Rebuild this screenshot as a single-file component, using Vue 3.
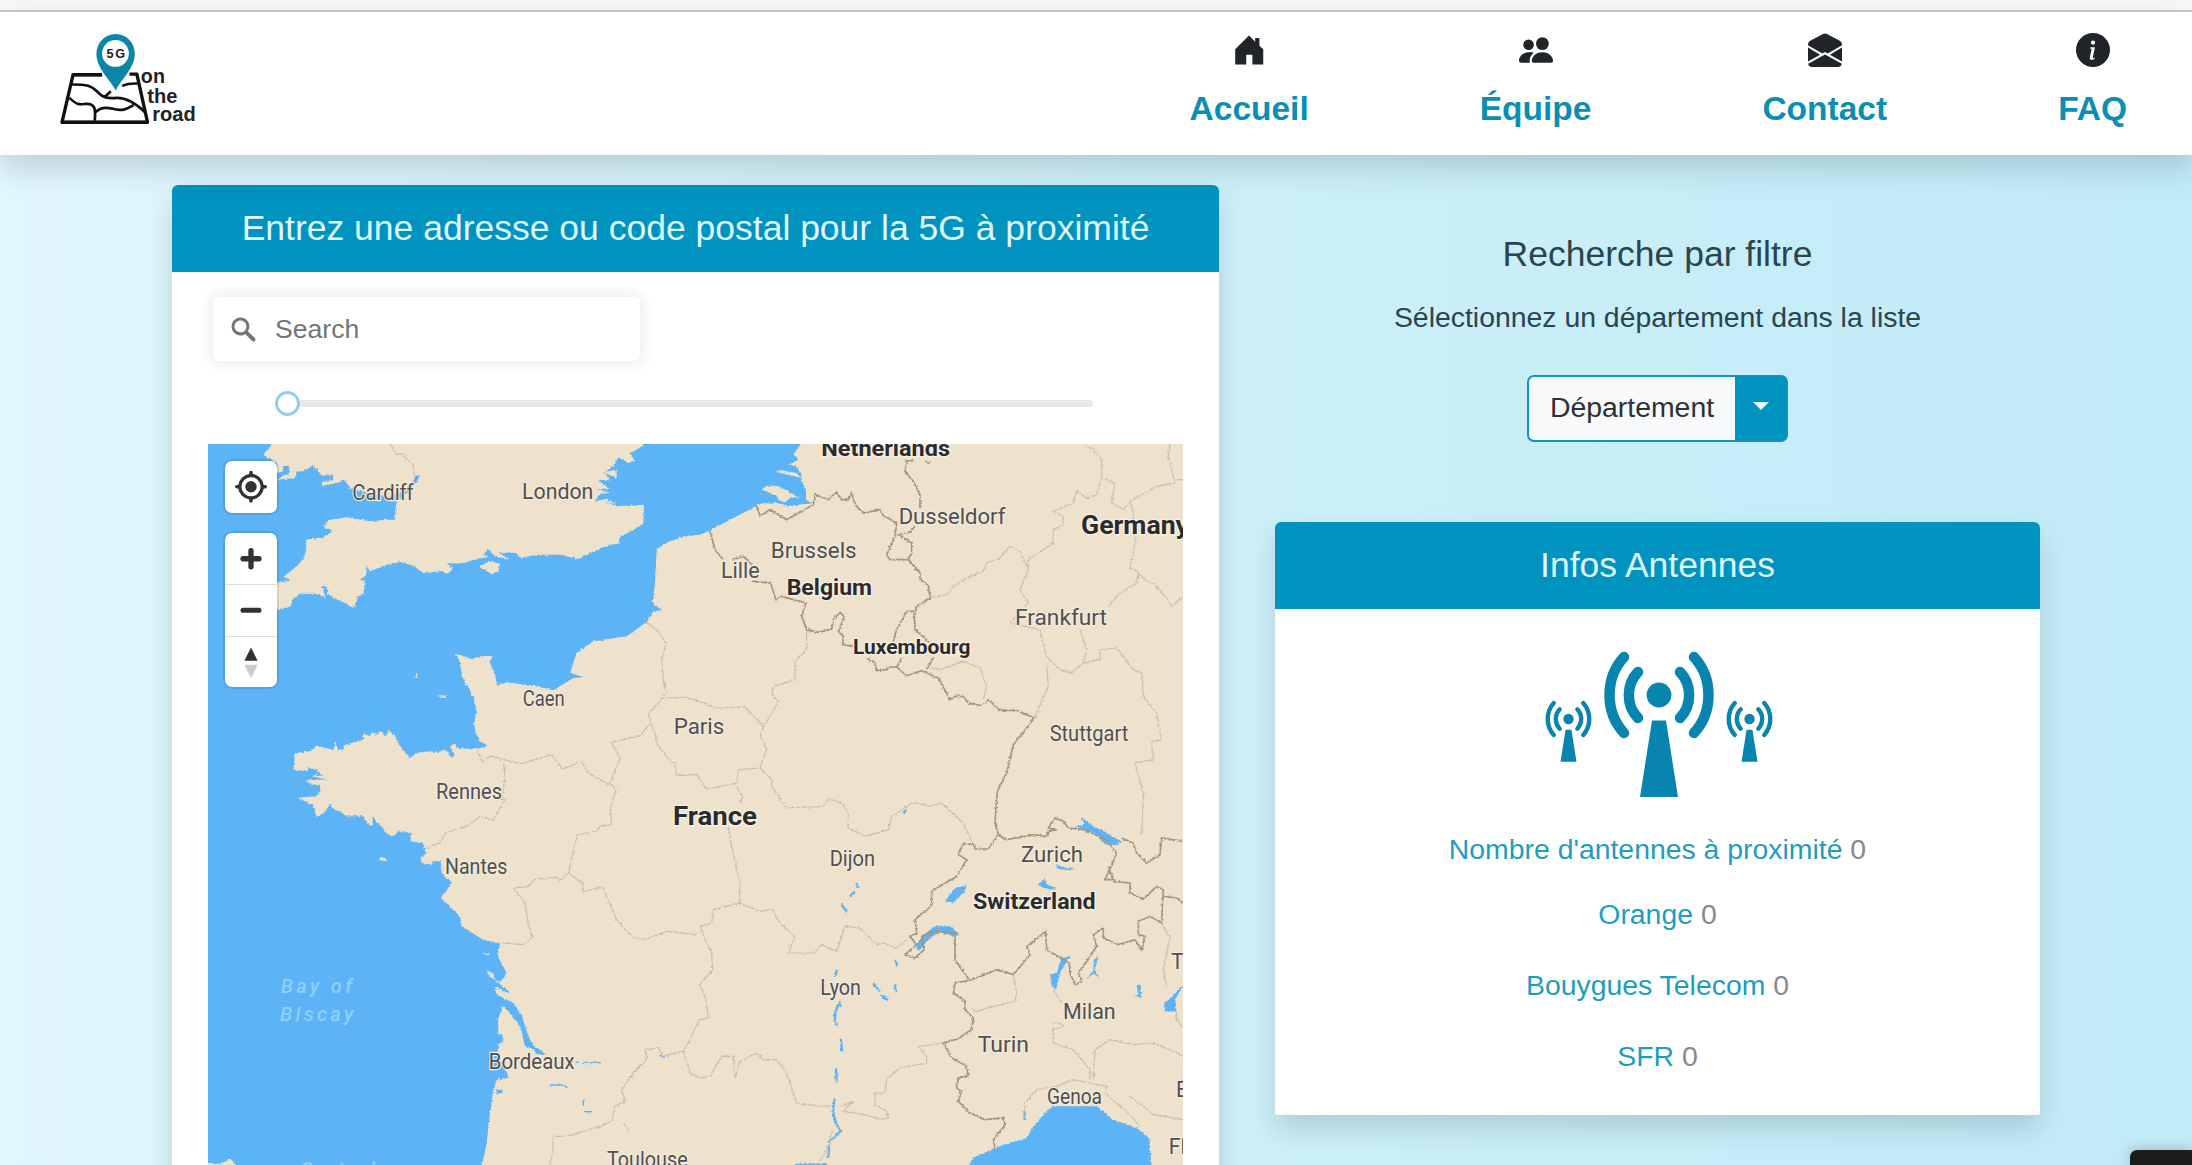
<script setup>
const nav = [
  { label: 'Accueil', icon: 'home' },
  { label: 'Équipe', icon: 'team' },
  { label: 'Contact', icon: 'mail' },
  { label: 'FAQ', icon: 'info' },
]

const counts = [
  { name: "Nombre d'antennes à proximité", value: 0 },
  { name: 'Orange', value: 0 },
  { name: 'Bouygues Telecom', value: 0 },
  { name: 'SFR', value: 0 },
]

// x, baseline and rendered width in map units
const cities = [
  { t: 'Cardiff', x: 457, y: 184, w: 184 },
  { t: 'London', x: 966, y: 181, w: 214 },
  { t: 'Caen', x: 968, y: 801, w: 126 },
  { t: 'Paris', x: 1421, y: 887, w: 152 },
  { t: 'Rennes', x: 708, y: 1080, w: 198 },
  { t: 'Nantes', x: 735, y: 1306, w: 187 },
  { t: 'Bordeaux', x: 866, y: 1892, w: 258 },
  { t: 'Toulouse', x: 1221, y: 2186, w: 242 },
  { t: 'Lille', x: 1563, y: 417, w: 116 },
  { t: 'Brussels', x: 1712, y: 359, w: 258 },
  { t: 'Dusseldorf', x: 2096, y: 257, w: 320 },
  { t: 'Frankfurt', x: 2445, y: 559, w: 276 },
  { t: 'Stuttgart', x: 2549, y: 907, w: 236 },
  { t: 'Dijon', x: 1889, y: 1281, w: 136 },
  { t: 'Zurich', x: 2463, y: 1269, w: 186 },
  { t: 'Lyon', x: 1861, y: 1670, w: 122 },
  { t: 'Milan', x: 2589, y: 1741, w: 158 },
  { t: 'Turin', x: 2333, y: 1839, w: 154 },
  { t: 'Genoa', x: 2541, y: 1996, w: 165 },
  { t: 'Trento', x: 2913, y: 1592, w: 184 },
  { t: 'Bologna', x: 2928, y: 1974, w: 232 },
  { t: 'Florence', x: 2906, y: 2146, w: 244 },
]
const countries = [
  { t: 'Netherlands', x: 1864, y: 51, w: 386, s: 64 },
  { t: 'Belgium', x: 1760, y: 470, w: 256, s: 66 },
  { t: 'Luxembourg', x: 1959, y: 646, w: 352, s: 60 },
  { t: 'Germany', x: 2643, y: 285, w: 324, s: 76 },
  { t: 'France', x: 1419, y: 1159, w: 252, s: 78 },
  { t: 'Switzerland', x: 2319, y: 1412, w: 368, s: 66 },
]
</script>

<template>
  <div class="page">
    <div class="chrome"></div>
    <header class="navbar">
      <svg class="logo" viewBox="0 0 410 275">
        <g fill="none" stroke="#111" stroke-width="8" stroke-linejoin="round">
          <path stroke-width="11" d="M126 125H40" />
          <path stroke-width="10" d="M40 121L6 267H262L230 123H208" />
          <path stroke-width="9" d="M6 267H262" />
          <path d="M36 154C80 154 94 156 112 176C128 194 142 196 170 194C202 193 228 212 254 236M133 192L152 174M186 158Q204 150 232 151M28 194C52 216 56 214 76 212C102 210 108 222 104 262M105 238C118 224 138 222 156 226C186 236 204 226 220 216" />
        </g>
        <path fill="#0a86a8" d="M167 172C152 142 109 106 109 62A57 59 0 0 1 224 62C224 106 180 142 167 172Z" />
        <circle cx="166" cy="61" r="40" fill="#fff" />
        <g fill="#222" font-family="Liberation Sans, Arial, sans-serif" font-weight="700">
          <text x="139" y="74" font-size="38" textLength="56">5G</text>
          <text x="242" y="149" font-size="62" textLength="72" lengthAdjust="spacingAndGlyphs">on</text>
          <text x="261" y="208" font-size="60" textLength="90" lengthAdjust="spacingAndGlyphs">the</text>
          <text x="276" y="262" font-size="60" textLength="130" lengthAdjust="spacingAndGlyphs">road</text>
        </g>
      </svg>
      <nav class="links">
        <a v-for="n in nav" :key="n.label" class="link">
          <svg class="nav-icon" viewBox="0 0 16 16" fill="#212529">
            <path v-if="n.icon === 'home'" d="M1.500 7.600L8 1.200L10.900 4.100V2.300H12.900V6L14.700 7.700V14.800H9.600V10.200H6.700V14.800H1.500Z" />
            <g v-else-if="n.icon === 'team'">
              <circle cx="11" cy="5" r="3" />
              <path d="M7 14s-1 0-1-1 1-4 5-4 5 3 5 4-1 1-1 1H7Z" />
              <path fill-rule="evenodd" d="M5.216 14A2.238 2.238 0 0 1 5 13c0-1.355.68-2.75 1.936-3.72A6.325 6.325 0 0 0 5 9c-4 0-5 3-5 4s1 1 1 1h4.216z" />
              <circle cx="4.5" cy="5.5" r="2.5" />
            </g>
            <path v-else-if="n.icon === 'mail'" d="M8.941.435a2 2 0 0 0-1.882 0l-6 3.2A2 2 0 0 0 0 5.4v.314l6.709 3.932L8 8.928l1.291.718L16 5.714V5.4a2 2 0 0 0-1.059-1.765l-6-3.2zM16 6.873l-5.693 3.337L16 13.372v-6.5zm-.059 7.611L8 10.072.059 14.484A2 2 0 0 0 2 16h12a2 2 0 0 0 1.941-1.516zM0 13.373l5.693-3.163L0 6.873v6.5z" />
            <path v-else d="M8 16A8 8 0 1 0 8 0a8 8 0 0 0 0 16zm.93-9.412-1 4.705c-.07.34.029.533.304.533.194 0 .487-.07.686-.246l-.088.416c-.287.346-.92.598-1.465.598-.703 0-1.002-.422-.808-1.319l.738-3.468c.064-.293.006-.399-.287-.47l-.451-.081.082-.381 2.29-.287zM8 5.5a1 1 0 1 1 0-2 1 1 0 0 1 0 2z" />
          </svg>
          <span>{{ n.label }}</span>
        </a>
      </nav>
    </header>

    <main class="content">
      <section class="card map-card">
        <h5 class="card-head">Entrez une adresse ou code postal pour la 5G à proximité</h5>
        <div class="map-body">
          <div class="search">
            <svg viewBox="0 0 18 18"><path fill="#757575" d="M7.4 2.5c-2.7 0-4.9 2.2-4.9 4.9s2.2 4.9 4.9 4.9c1 0 1.8-.2 2.5-.8l3.7 3.7c.2.2.4.3.8.3.7 0 1.1-.4 1.1-1.1 0-.3-.1-.5-.3-.8L11.4 10c.4-.8.8-1.6.8-2.5.1-2.8-2.1-5-4.8-5zm0 1.6c1.8 0 3.2 1.4 3.2 3.2s-1.4 3.2-3.2 3.2-3.3-1.3-3.3-3.1 1.4-3.3 3.3-3.3z" /></svg>
            <span>Search</span>
          </div>
          <div class="slider"><i class="thumb"></i><i class="rail"></i></div>
          <div class="map">
            <svg class="map-svg" viewBox="24 14 2925 2161">
              <defs>
                <filter id="rough" x="-2%" y="-2%" width="104%" height="104%">
                  <feTurbulence type="fractalNoise" baseFrequency="0.16" numOctaves="2" seed="4" />
                  <feDisplacementMap in="SourceGraphic" scale="10" xChannelSelector="R" yChannelSelector="G" />
                </filter>
              </defs>
              <rect width="3000" height="2300" fill="#eee2cc" />
              <g filter="url(#rough)">
                <g fill="#5cb3f5">
                  <path d="M-40-40L225-40 215 14 190 45 215 60 232 75 230 100 250 95 245 80 265 78 270 98 232 120 285 115 290 98 315 92 340 78 355 95 365 108 400 105 398 122 362 128 365 138 400 132 435 122 450 145 520 165 580 170 615 150 635 138 645 108 660 105 650 128 628 155 590 182 583 240 560 240 510 245 440 233 385 242 372 262 398 272 365 298 320 298 316 350 290 380 250 412 275 420 232 430 225 450 232 512 272 500 280 475 300 462 350 462 378 474 365 440 380 438 385 465 410 480 430 488 460 505 475 470 490 465 495 420 478 420 498 408 500 378 510 395 560 375 600 367 640 378 670 400 720 395 745 402 760 385 740 372 790 370 830 358 868 352 850 345 865 328 885 350 930 360 895 338 950 340 960 355 1010 345 1080 345 1135 358 1160 345 1230 315 1255 312 1262 292 1330 252 1332 195 1250 200 1215 185 1250 194 1220 178 1185 185 1200 162 1230 160 1190 148 1228 148 1195 120 1230 122 1210 98 1250 115 1250 90 1215 97 1240 80 1255 52 1285 70 1305 62 1290 40 1330 18 1330-40 1805-40 1802 14 1780 45 1795 60 1765 75 1790 80 1803 108 1808 130 1818 155 1818 182 1840 190 1760 200 1740 190 1670 192 1670 200 1600 235 1530 272 1500 285 1450 290 1400 310 1370 330 1365 430 1358 490 1385 512 1360 515 1340 548 1280 590 1180 605 1130 640 1110 700 1155 713 1120 715 1060 752 1010 740 920 728 890 738 885 700 868 670 878 650 845 648 815 658 765 642 780 665 785 710 820 770 830 820 822 850 828 880 840 905 865 918 830 928 770 925 765 910 750 920 765 945 755 955 740 930 710 938 690 935 650 940 630 955 600 920 585 890 565 870 560 890 540 875 530 885 515 875 510 890 490 880 490 900 430 918 432 928 415 930 405 905 400 930 350 918 330 935 285 940 280 990 320 995 325 985 350 990 370 1010 350 1005 335 1010 385 1020 315 1022 335 1035 360 1035 360 1060 345 1070 290 1075 340 1095 350 1132 370 1120 392 1092 400 1110 420 1115 440 1130 490 1130 500 1150 515 1160 520 1130 530 1150 545 1158 555 1178 575 1190 600 1175 635 1180 630 1205 668 1210 680 1240 662 1255 665 1270 695 1275 700 1265 722 1265 725 1300 755 1330 722 1375 780 1430 785 1460 850 1500 900 1512 893 1550 915 1590 920 1600 905 1625 885 1622 930 1657 925 1660 885 1640 890 1665 940 1690 965 1725 985 1790 1000 1820 1020 1830 1040 1847 1010 1843 1000 1828 975 1820 960 1760 925 1715 908 1700 895 1735 895 1850 920 1895 925 1915 890 1920 880 1950 870 2020 860 2110 830 2250-40 2250Z" />
                  <path d="M2270 2250L2318 2155 2385 2125 2480 2095 2500 2060 2540 2015 2560 2000 2690 2000 2740 2040 2810 2065 2848 2095 2860 2250Z" />
                  <path d="M2235 1385L2265 1345 2300 1337 2295 1355 2260 1388Z" />
                  <path d="M2148 1520L2165 1490 2205 1460 2250 1460 2280 1485 2260 1490 2220 1478 2185 1500 2155 1535Z" />
                  <path d="M2640 1130L2680 1160 2720 1180 2765 1205 2750 1215 2720 1215 2700 1200 2685 1180 2625 1160 2655 1155Z" />
                  <path d="M2565 1272Q2590 1285 2625 1287L2610 1292 2575 1287Z" />
                  <path d="M2512 1335L2535 1318 2540 1335 2572 1345 2565 1350 2530 1345Z" />
                  <path d="M2585 1555L2610 1550 2580 1600 2568 1650 2555 1640 2550 1605 2570 1600ZM2695 1550L2685 1590 2700 1620 2680 1600 2655 1625 2680 1590 2682 1560ZM2950 1635L2925 1680 2928 1715 2895 1715 2892 1690 2910 1678ZM2810 1635H2822L2825 1675 2800 1670 2814 1665Z" />
                  <path d="M893 1785L908 1785 908 1805 893 1815ZM890 1950L908 1950 905 1960 890 1965ZM2042 1665L2060 1670 2065 1682 2050 1680Z" />
                </g>
                <g fill="#eee2cc">
                  <path d="M838 380L870 364 900 372 895 395 875 404ZM1685 150L1700 138 1735 140 1775 160 1800 178 1775 172 1755 188 1735 180 1730 168ZM1726 96L1745 92 1790 100 1803 115 1770 106ZM640 715L650 702 655 713ZM708 768L740 767 738 776 724 772ZM540 1252L555 1255 563 1265 540 1262ZM857 1590L880 1600 885 1622 872 1612ZM845 1538L875 1547 860 1547Z" />
                  <path d="M24 2170L60 2172 90 2157 112 2178 24 2220Z" />
                </g>
                <g fill="none" stroke="#5cb3f5" stroke-width="7">
                  <path d="M1925 1394L1940 1417M1912 1590L1905 1610 1910 1594M1920 1684L1905 1720 1905 1740 1912 1760M1924 1700L1915 1690M1922 1797L1927 1835M1908 1887L1910 1925M1904 1977L1898 2015 1908 2050 1922 2075 1888 2105 1885 2155M2086 1560L2092 1580M2085 1635L2088 1655M2020 1632L2040 1655M1950 1370L1965 1355M1970 1330L1972 1345M2110 1120L2120 1110M1785 2175H1880M2474 2015V2040" />
                  <path stroke-width="4" d="M1050 1936H1088L1102 1944M1150 1980V1996M1152 2016H1178M1125 1872L1135 1866M1148 1872L1162 1866 1170 1872 1180 1866 1202 1870M1380 1848L1398 1854" />
                </g>
                <g class="region">
                  <path d="M572 14L590 45 605 42 640 78 642 108M1340 548L1375 575 1398 610 1385 660 1390 720 1398 760 1385 780 1345 820 1352 850 1320 888 1235 908 1260 955 1230 1030 1248 1050 1230 1110 1235 1155 1200 1160 1190 1175 1132 1185 1105 1300 1148 1330 1150 1355 1208 1342 1250 1440 1300 1495 1340 1498 1400 1475 1490 1485" />
                  <path d="M1398 775L1450 772 1490 782 1545 805 1635 802 1690 860 1680 885 1700 930 1680 985 1615 990 1610 1030 1520 1048 1490 1005 1430 1008 1425 970 1410 965 1370 910 1365 880 1352 850M1610 1040L1628 1070 1620 1090" />
                  <path d="M1820 575L1820 630 1785 665 1785 720 1720 740 1715 765 1735 785 1715 820 1690 860M1680 985L1715 1020 1715 1040 1745 1085 1760 1105 1870 1100 1885 1078 1925 1090 1945 1120 1945 1165 1995 1190 2065 1170 2075 1130 2140 1088 2190 1100 2225 1090 2290 1150 2315 1205" />
                  <path d="M830 930L848 968 870 948 910 960 965 972 1055 945 1088 988 1145 965 1165 1000 1230 1035M910 960L915 1010 905 1080 915 1080 880 1142 840 1130 800 1160 735 1180 720 1210 678 1225M945 1345L985 1340 1005 1320 1070 1312 1078 1322 1105 1300M940 1345L975 1390 990 1480 1000 1490 970 1515 905 1510" />
                  <path d="M1585 1160L1595 1220 1620 1330 1618 1390 1540 1410 1535 1450 1500 1460 1520 1510 1535 1540 1538 1590 1500 1635 1518 1680 1525 1735 1500 1740 1480 1775 1470 1800 1450 1835 1470 1900 1500 1915 1530 1910 1565 1850 1600 1850 1605 1915 1620 1865 1670 1840 1690 1860 1730 1860 1760 1900 1790 1990 1860 2000 1895 1998M1618 1390L1680 1415 1715 1408 1740 1450 1785 1490 1765 1540 1845 1540 1865 1515 1910 1535 1935 1460 1980 1465 2030 1515 2050 1510 2090 1525 2120 1500" />
                  <path d="M1450 1835L1390 1850 1375 1825 1335 1830 1340 1860 1300 1900 1265 1950 1275 1985 1245 2000 1235 2045 1200 2060 1100 2090 1060 2090 1058 2140 1050 2175M1270 2050L1290 2075M1920 2000L1960 1985 1930 2015 1995 2025 2040 2040 2065 2035 2060 2015 2025 1995 2025 1960 2055 1960 2060 1920 2100 1885 2180 1870 2180 1850 2155 1820 2235 1810M1895 2075L1885 2120 1860 2165" />
                  <path d="M2190 475L2240 465 2260 440 2310 410 2350 395 2360 370 2400 355 2430 320 2460 335 2485 390 2485 360 2560 310 2560 270 2590 255 2590 230 2560 215 2620 190 2630 155 2660 175 2690 165 2705 110 2705 60 2680 30 2660 20M2485 390L2460 450 2485 490 2430 550 2520 570 2540 650 2580 690 2615 700 2650 670 2660 630 2640 570M2540 680L2545 740 2503 835M2190 685L2220 690 2290 665 2340 685 2360 740 2350 780M2650 670L2700 660 2700 630 2750 625 2800 690 2825 700 2830 770 2870 820 2885 900 2855 905 2860 960 2805 970 2830 1060 2825 1185" />
                  <path d="M2705 115L2745 130 2735 190 2770 210 2790 185 2870 140 2925 130 2905 50 2910 14M2790 185L2800 220 2805 310 2790 385 2815 395 2810 430 2760 460 2725 500M2815 400L2840 425 2860 430 2900 475 2915 500 2950 470M2925 120H2950" />
                  <path d="M2440 1605L2450 1660 2445 1685 2380 1700 2330 1715 2310 1705M2560 1650L2585 1690M2560 1750L2580 1750 2590 1760 2560 1770 2560 1810 2620 1830 2670 1890 2670 1920M2680 1920L2685 1830 2730 1800 2800 1815 2860 1810 2920 1835 2950 1850M2470 2040L2475 1990 2510 1950 2570 1940 2620 1920 2720 1940 2715 1965M2790 1970L2830 2000 2860 2025 2950 2040M2720 1965L2790 2025 2820 2060M2885 1450L2910 1495 2890 1590 2900 1640M2930 1715V1740L2950 1765" />
                </g>
                <g class="border">
                  <path d="M1530 275L1545 330 1570 360M1598 360L1630 350 1655 375M1655 425L1712 430 1728 480 1745 470 1800 485 1818 490 1805 530 1820 570 1855 578 1895 568 1900 540 1920 518 1933 530 1915 575 1930 590 1928 615 1960 620M2000 655L2025 670 2030 693 2060 690 2068 682 2090 682 2120 708 2165 693 2215 715 2250 780 2265 770 2290 770 2305 790 2345 798 2365 780 2400 812 2450 812 2503 835 2440 915 2420 1000 2392 1055 2385 1150 2395 1185 2365 1228 2325 1228 2320 1213 2290 1213 2275 1245 2300 1260 2270 1310 2195 1355 2195 1398 2145 1440 2150 1480 2130 1490 2150 1515 2115 1545 2145 1555 2172 1530 2165 1490 2200 1475 2265 1480 2265 1560 2300 1610 2308 1622 2265 1630 2260 1660 2295 1685 2295 1710 2320 1735 2315 1770 2275 1797 2230 1810 2255 1855 2300 1880 2305 1908 2275 1915 2270 1945 2285 1955 2275 1985 2310 2020 2355 2040 2410 2035 2415 2055 2380 2100 2385 2125" />
                  <path d="M1670 195L1680 228 1710 210 1760 240 1840 195 1845 165 1885 180 1910 158 1925 180 1945 180 1955 160 1965 195 1990 220 2040 210 2050 228 2090 250 2085 290 2060 345 2070 360 2125 360 2160 400 2160 420 2185 435 2190 475 2150 500 2143 530 2145 570 2190 610M2200 655L2180 690M2120 65L2115 95 2140 125 2160 165 2160 205M2145 260L2130 278 2095 285 2135 310 2135 340 2125 360M2080 605L2090 570 2120 515 2143 515M2105 655L2090 682M2115 65L2140 62M2175 65L2192 68" />
                  <path d="M2395 1185L2420 1200 2500 1185 2540 1190 2545 1175 2570 1170 2545 1165 2565 1135 2590 1145 2605 1165 2650 1170 2720 1200 2750 1240 2740 1265 2715 1320 2740 1320 2725 1280M2740 1325L2790 1330 2790 1360 2830 1378 2870 1340 2890 1350 2885 1440 2885 1450 2850 1430 2815 1445 2815 1485 2835 1490 2825 1530 2805 1500 2755 1515 2710 1495 2710 1465 2680 1485 2690 1520 2635 1600 2645 1625 2625 1635 2610 1600 2608 1570 2540 1530 2537 1475 2480 1520 2490 1545 2440 1605 2390 1590 2310 1622M2765 1195L2800 1210 2810 1240 2840 1270 2880 1245 2885 1195 2950 1205M2890 1370L2930 1375 2950 1392" />
                </g>
              </g>
              <g transform="translate(0 -3)">
                <g class="sea">
                  <text x="242" y="1663" textLength="214">Bay of</text>
                  <text x="240" y="1747" textLength="220">Biscay</text>
                  <text x="300" y="2212" textLength="260">Costa de</text>
                </g>
                <g class="city">
                  <text v-for="c in cities" :key="c.t" :x="c.x" :y="c.y" :textLength="c.w" lengthAdjust="spacingAndGlyphs">{{ c.t }}</text>
                </g>
                <g class="country">
                  <text v-for="c in countries" :key="c.t" :x="c.x" :y="c.y" :font-size="c.s" :textLength="c.w" lengthAdjust="spacingAndGlyphs">{{ c.t }}</text>
                </g>
              </g>
            </svg>
            <div class="controls">
              <div class="ctrl">
                <svg viewBox="0 0 29 29" fill="#333">
                  <path d="M14.5 5.5c-.6 0-1 .4-1 1v.8a7.3 7.3 0 0 0-6.2 6.2h-.8a1 1 0 0 0 0 2h.8a7.3 7.3 0 0 0 6.2 6.2v.8a1 1 0 0 0 2 0v-.8a7.3 7.3 0 0 0 6.2-6.2h.8a1 1 0 0 0 0-2h-.8a7.3 7.3 0 0 0-6.2-6.2v-.8c0-.6-.4-1-1-1zm0 3.6a5.4 5.4 0 1 1 0 10.8 5.4 5.4 0 0 1 0-10.8z" />
                  <circle cx="14.5" cy="14.5" r="3.2" />
                </svg>
              </div>
              <div class="ctrl">
                <svg viewBox="0 0 29 29"><path stroke="#333" stroke-width="3" stroke-linecap="round" d="M14.5 10v9M10 14.5h9" /></svg>
                <svg viewBox="0 0 29 29"><path stroke="#333" stroke-width="3" stroke-linecap="round" d="M10 14.5h9" /></svg>
                <svg viewBox="0 0 29 29"><path fill="#333" d="M10.700 13.700l3.800-7.700 3.800 7.700z" /><path fill="#ccc" d="M10.700 16l3.800 7.700 3.800-7.700z" /></svg>
              </div>
            </div>
          </div>
        </div>
      </section>

      <div class="side">
        <section class="filter">
          <h5>Recherche par filtre</h5>
          <p>Sélectionnez un département dans la liste</p>
          <div class="dropdown">
            <span class="choice">Département</span>
            <span class="toggle"><i></i></span>
          </div>
        </section>
        <section class="card info-card">
          <h5 class="card-head">Infos Antennes</h5>
          <div class="info-body">
            <svg class="antennas" viewBox="0 0 228 146">
              <defs>
                <g id="antenna">
                  <g fill="none" stroke="#0785ae" stroke-width="10.500" stroke-linecap="round">
                    <path d="M-35-38A50 54 0 0 0-35 38M35-38A50 54 0 0 1 35 38M-21-23A30 32 0 0 0-21 23M21-23A30 32 0 0 1 21 23" />
                  </g>
                  <circle r="12.4" fill="#0785ae" />
                  <path fill="#0785ae" d="M-7 25.500H7L19 102H-19Z" />
                </g>
              </defs>
              <use href="#antenna" transform="translate(114 44)" />
              <use href="#antenna" transform="translate(23.500 68) scale(.42)" />
              <use href="#antenna" transform="translate(204.500 68) scale(.42)" />
            </svg>
            <p v-for="c in counts" :key="c.name"><span>{{ c.name }}</span> {{ c.value }}</p>
          </div>
        </section>
      </div>
    </main>
    <div class="corner"></div>
  </div>
</template>

<style>
body {
  margin: 0;
  overflow: hidden;
}
</style>

<style scoped>
* {
  box-sizing: border-box;
}
.page {
  position: relative;
  height: 1165px;
  overflow: hidden;
  font-family: 'Liberation Sans', Arial, sans-serif;
  font-size: 28.4px;
  color: #212529;
  background: linear-gradient(to right, #e1f6fd, #cdf0f8 55%, #c1ebf7);
}
.chrome {
  height: 12px;
  background: #f7f6f8;
  border-bottom: 2px solid #c9c8ca;
}
.navbar {
  position: relative;
  display: flex;
  justify-content: space-between;
  align-items: flex-start;
  height: 143px;
  padding: 20px 65px 0 60px;
  background: #fff;
  box-shadow: 0 14px 28px rgba(0, 0, 0, 0.15);
}
.logo {
  width: 137px;
  height: 92px;
  margin-top: 1px;
}
.links {
  display: flex;
  gap: 171px;
}
.link {
  display: flex;
  flex-direction: column;
  align-items: center;
  color: #0a8fb3;
  font-size: 33.5px;
  font-weight: 700;
  line-height: 50px;
}
.nav-icon {
  width: 34px;
  height: 34px;
  margin: 1px 0 17px;
}
.content {
  display: flex;
  gap: 56px;
  padding: 30px 0 0 172px;
}
.card {
  background: #fff;
  border-radius: 6px 6px 2px 2px;
  box-shadow: 0 14px 28px rgba(0, 0, 0, 0.14);
}
.card-head {
  display: flex;
  align-items: center;
  justify-content: center;
  height: 87px;
  margin: 0;
  border-radius: 6px 6px 0 0;
  background: #0093bf;
  color: #dff8ff;
  font-size: 35.5px;
  font-weight: 400;
}
.map-card {
  width: 1047px;
  height: 1040px;
}
.map-body {
  display: flex;
  flex-direction: column;
  padding: 25px 35px 0 36px;
}
.search {
  display: flex;
  align-items: center;
  width: 427px;
  height: 64px;
  margin-left: 5px;
  padding-left: 14px;
  gap: 15px;
  border-radius: 6px;
  color: #757575;
  font-size: 26.600px;
  box-shadow: 0 0 14px 3px rgba(0, 0, 0, 0.08);
}
.search svg {
  width: 33px;
  height: 33px;
}
.slider {
  display: flex;
  align-items: center;
  height: 26px;
  margin: 29px 0 28px 67px;
}
.thumb {
  width: 25px;
  height: 25px;
  border: 3px solid #91cfee;
  border-radius: 50%;
  background: #fff;
}
.rail {
  width: 793px;
  height: 7px;
  border-radius: 0 3px 3px 0;
  background: #e9e9eb;
}
.map {
  position: relative;
  width: 975px;
  height: 721px;
  overflow: hidden;
}
.map-svg {
  display: block;
  width: 975px;
  height: 721px;
}
.map-svg text {
  font-family: Roboto, 'Open Sans', sans-serif;
}
.region {
  fill: none;
  stroke: #c9bfad;
  stroke-width: 3.5;
}
.border {
  fill: none;
  stroke: #a1977f;
  stroke-width: 5;
}
.city text {
  font-size: 64px;
  fill: #504f52;
  stroke: #f3ebdd;
  stroke-width: 7px;
  paint-order: stroke;
}
.country text {
  font-weight: 700;
  fill: #2b2a2f;
  stroke: #f6efe2;
  stroke-width: 8px;
  paint-order: stroke;
}
.sea text {
  font-size: 60px;
  font-style: italic;
  font-weight: 500;
  fill: #8fcffc;
}
.controls {
  position: absolute;
  top: 17px;
  left: 17px;
  display: flex;
  flex-direction: column;
  gap: 20px;
}
.ctrl {
  display: flex;
  flex-direction: column;
  width: 52px;
  border-radius: 7px;
  background: #fff;
  box-shadow: 0 0 0 2px rgba(0, 0, 0, 0.09);
}
.ctrl svg {
  width: 52px;
  height: 51.500px;
}
.ctrl svg + svg {
  border-top: 1.500px solid #ddd;
}
.side {
  display: flex;
  flex-direction: column;
  width: 765px;
}
.filter {
  display: flex;
  flex-direction: column;
  align-items: center;
  height: 337px;
  padding-top: 48px;
  color: #2a4450;
}
.filter h5 {
  margin: 0;
  font-size: 35.5px;
  font-weight: 400;
  line-height: 43px;
}
.filter p {
  margin: 20px 0 36px;
  line-height: 43px;
}
.dropdown {
  display: flex;
  width: 261px;
  height: 67px;
  border: 2px solid #0f94bb;
  border-radius: 7px;
  background: #f8f9fa;
  color: #2d3038;
}
.choice {
  flex: 1;
  line-height: 61px;
  text-align: center;
}
.toggle {
  display: flex;
  justify-content: center;
  width: 51px;
  background: #0093bf;
}
.toggle i {
  height: 0;
  margin-top: 25px;
  border: 8.500px solid transparent;
  border-top-color: #e6fbff;
  border-bottom: 0;
}
.info-card {
  height: 593px;
}
.info-body {
  display: flex;
  flex-direction: column;
  align-items: center;
  padding-top: 42px;
}
.antennas {
  width: 228px;
  height: 146px;
  margin: 0 0 31px 3px;
}
.info-body p {
  margin: 0 0 28.500px;
  line-height: 42.600px;
  color: #85888c;
}
.info-body p:first-of-type {
  margin-bottom: 22px;
}
.info-body span {
  color: #1f9cc0;
}
.corner {
  position: absolute;
  right: 0;
  bottom: 0;
  width: 62px;
  height: 15px;
  border-radius: 7px 0 0 0;
  background: #1b1d1f;
  box-shadow: 0 0 14px rgba(0, 0, 0, 0.25);
}
</style>
